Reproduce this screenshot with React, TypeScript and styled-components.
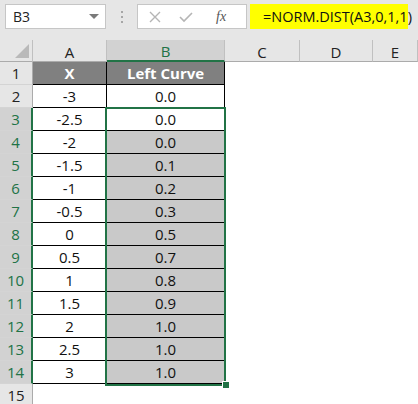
import React from 'react'
import styled, { createGlobalStyle } from 'styled-components'

const GlobalStyle = createGlobalStyle`
  html, body {
    margin: 0;
    padding: 0;
    background: #ffffff;
    font-family: "Open Sans", "Liberation Sans", sans-serif;
  }
`

const GREEN = '#217346'

const Page = styled.div`
  width: 418px;
  height: 404px;
  overflow: hidden;
  background: #ffffff;
`

const TopBar = styled.div`
  height: 40px;
  background: #e6e6e6;
  display: flex;
  align-items: flex-start;
  padding: 4px 0 0 5px;
  box-sizing: border-box;
`

const NameBox = styled.div`
  width: 101px;
  height: 25px;
  box-sizing: border-box;
  background: #ffffff;
  border: 1px solid #c6c6c6;
  display: flex;
  align-items: center;
  justify-content: space-between;
  padding: 0 6px 0 7px;
  font-size: 14px;
  color: #222;
`

const Caret = styled.span`
  width: 0;
  height: 0;
  border-left: 5px solid transparent;
  border-right: 5px solid transparent;
  border-top: 5px solid #7a7a7a;
`

const Dots = styled.div`
  width: 31px;
  height: 25px;
  display: flex;
  flex-direction: column;
  align-items: center;
  justify-content: center;
  gap: 3px;
  span {
    width: 2px;
    height: 2px;
    background: #a6a6a6;
  }
`

const FxBox = styled.div`
  width: 110px;
  height: 25px;
  box-sizing: border-box;
  background: #ffffff;
  border: 1px solid #c6c6c6;
  display: flex;
  align-items: center;
  padding: 0 0 0 10px;
  gap: 16px;
  color: #b5b5b5;
`

const Fx = styled.span`
  font-family: "Liberation Serif", serif;
  font-style: italic;
  font-size: 14px;
  color: #555;
  margin-left: 6px;
`

const Formula = styled.div`
  margin-left: 3px;
  width: 158px;
  height: 25px;
  background: #ffff00;
  display: flex;
  align-items: center;
  padding-left: 13px;
  box-sizing: border-box;
  font-size: 14.5px;
  color: #111;
  white-space: nowrap;
`

const Sheet = styled.div`
  position: relative;
  display: grid;
  grid-template-columns: 33px 74px 118px 75px 73px 45px;
  grid-template-rows: 22px repeat(15, 23px);
`

const Corner = styled.div`
  background: #e6e6e6;
  border-right: 1px solid #c0c0c0;
  border-bottom: 1px solid #ababab;
  box-sizing: border-box;
  position: relative;
  &::after {
    content: '';
    position: absolute;
    right: 3px;
    bottom: 3px;
    border-left: 14px solid transparent;
    border-bottom: 14px solid #b9b9b9;
  }
`

const ColHead = styled.div<{ $sel?: boolean }>`
  box-sizing: border-box;
  background: ${p => (p.$sel ? '#d2d2d2' : '#e6e6e6')};
  color: ${p => (p.$sel ? GREEN : '#222')};
  border-right: 1px solid #c0c0c0;
  border-bottom: ${p => (p.$sel ? `2px solid ${GREEN}` : '1px solid #ababab')};
  display: flex;
  align-items: center;
  justify-content: center;
  font-size: 15px;
  padding-top: 2px;
`

const RowHead = styled.div<{ $sel?: boolean }>`
  box-sizing: border-box;
  background: ${p => (p.$sel ? '#d2d2d2' : '#e6e6e6')};
  color: ${p => (p.$sel ? GREEN : '#222')};
  border-right: ${p => (p.$sel ? `2px solid ${GREEN}` : '1px solid #ababab')};
  border-bottom: 1px solid #d4d4d4;
  display: flex;
  align-items: center;
  justify-content: center;
  font-size: 15px;
`

const Cell = styled.div<{ $fill?: string; $head?: boolean }>`
  box-sizing: border-box;
  background: ${p => p.$fill || '#ffffff'};
  color: ${p => (p.$head ? '#ffffff' : '#111')};
  font-weight: ${p => (p.$head ? 700 : 400)};
  border-right: 1px solid #000;
  border-bottom: 1px solid #000;
  display: flex;
  align-items: center;
  justify-content: center;
  font-size: 15px;
`

const Empty = styled.div`
  background: #ffffff;
`

const Selection = styled.div`
  position: absolute;
  left: 105px;
  top: 67px;
  width: 121px;
  height: 279px;
  border: 2px solid ${GREEN};
  box-sizing: border-box;
  pointer-events: none;
`

const Handle = styled.div`
  position: absolute;
  left: 222px;
  top: 341px;
  width: 6px;
  height: 6px;
  background: ${GREEN};
  border: 1px solid #ffffff;
  box-sizing: content-box;
`

const rows: [string, string][] = [
  ['-3', '0.0'],
  ['-2.5', '0.0'],
  ['-2', '0.0'],
  ['-1.5', '0.1'],
  ['-1', '0.2'],
  ['-0.5', '0.3'],
  ['0', '0.5'],
  ['0.5', '0.7'],
  ['1', '0.8'],
  ['1.5', '0.9'],
  ['2', '1.0'],
  ['2.5', '1.0'],
  ['3', '1.0'],
]

export default function App() {
  return (
    <Page>
      <GlobalStyle />
      <TopBar>
        <NameBox>
          B3
          <Caret />
        </NameBox>
        <Dots>
          <span />
          <span />
          <span />
        </Dots>
        <FxBox>
          <svg width="14" height="14" viewBox="0 0 14 14">
            <path d="M2 2 L12 12 M12 2 L2 12" stroke="#b5b5b5" strokeWidth="1.4" fill="none" />
          </svg>
          <svg width="16" height="14" viewBox="0 0 16 14">
            <path d="M2 7 L6 11 L14 3" stroke="#b5b5b5" strokeWidth="1.6" fill="none" />
          </svg>
          <Fx>fx</Fx>
        </FxBox>
        <Formula>=NORM.DIST(A3,0,1,1)</Formula>
      </TopBar>
      <Sheet>
        <Corner />
        <ColHead>A</ColHead>
        <ColHead $sel>B</ColHead>
        <ColHead>C</ColHead>
        <ColHead>D</ColHead>
        <ColHead>E</ColHead>

        <RowHead>1</RowHead>
        <Cell $fill="#808080" $head>X</Cell>
        <Cell $fill="#808080" $head>Left Curve</Cell>
        <Empty />
        <Empty />
        <Empty />

        {rows.map(([x, y], i) => {
          const r = i + 2
          const sel = r >= 3
          return (
            <React.Fragment key={r}>
              <RowHead $sel={sel}>{r}</RowHead>
              <Cell>{x}</Cell>
              <Cell $fill={r >= 4 ? '#c9c9c9' : '#ffffff'}>{y}</Cell>
              <Empty />
              <Empty />
              <Empty />
            </React.Fragment>
          )
        })}

        <RowHead>15</RowHead>
        <Empty />
        <Empty />
        <Empty />
        <Empty />
        <Empty />

        <Selection />
        <Handle />
      </Sheet>
    </Page>
  )
}
